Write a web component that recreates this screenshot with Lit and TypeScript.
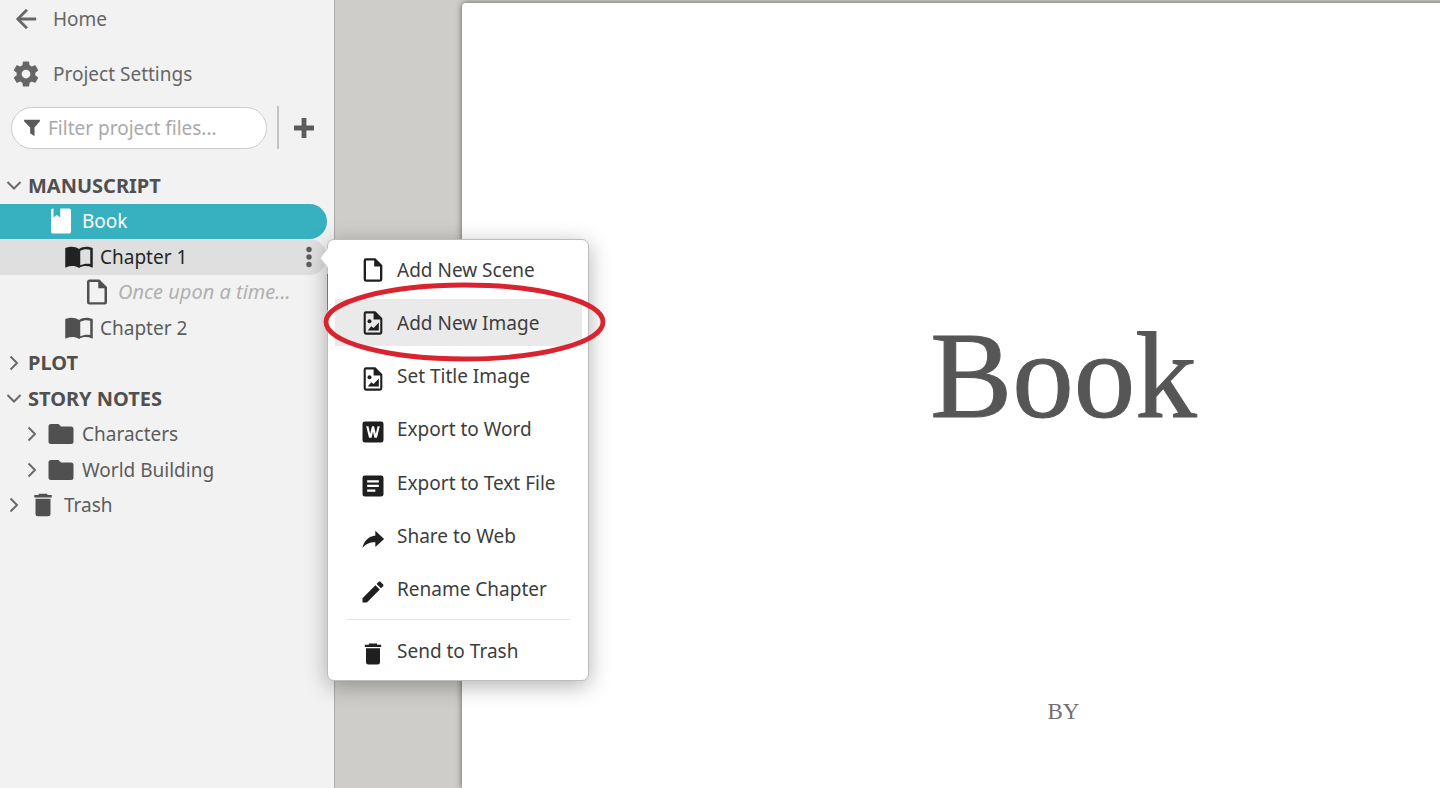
import { LitElement, html, css, svg, nothing } from "lit";
import { customElement, state } from "lit/decorators.js";
import { classMap } from "lit/directives/class-map.js";

const icons = {
  back: svg`<path d="M20 11H7.8l5.600-5.600L12 4l-8 8 8 8 1.400-1.400L7.800 13H20z" stroke="currentColor" stroke-width=".3"/>`,
  gear: svg`<path d="M12 15.5A3.5 3.5 0 0 1 8.5 12 3.5 3.5 0 0 1 12 8.500a3.500 3.500 0 0 1 3.500 3.500 3.500 3.500 0 0 1-3.500 3.500m7.430-2.530c.04-.32.07-.64.07-.97s-.03-.66-.07-1l2.110-1.630c.19-.15.24-.42.12-.64l-2-3.460c-.12-.22-.39-.31-.61-.22l-2.490 1c-.52-.39-1.060-.73-1.690-.98l-.37-2.650A.506.506 0 0 0 14 2h-4c-.25 0-.46.18-.5.42l-.37 2.650c-.63.25-1.170.59-1.690.98l-2.490-1c-.22-.09-.49 0-.61.22l-2 3.460c-.13.22-.07.49.12.64L4.570 11c-.04.34-.07.67-.07 1s.03.65.07.97l-2.110 1.660c-.19.15-.25.42-.12.64l2 3.460c.12.22.39.3.61.22l2.490-1.010c.52.4 1.060.74 1.690.99l.37 2.650c.04.24.25.42.5.42h4c.25 0 .46-.18.5-.42l.37-2.650c.63-.26 1.170-.59 1.690-.99l2.490 1.010c.22.08.49 0 .61-.22l2-3.460c.12-.22.07-.49-.12-.64z"/>`,
  filter: svg`<path d="M2.500 2h19v1.800l-6.500 7.600v10.600l-5.200-3.800v-6.800L2.500 3.800z"/>`,
  plus: svg`<path d="M9.600 2h4.800v7.600H22v4.800h-7.600V22H9.600v-7.600H2V9.600h7.600z"/>`,
  book: svg`<path d="M5.500 2H6v7.200l2.700-2 2.700 2V2H18.500A1.500 1.500 0 0 1 20 3.500v17A1.500 1.500 0 0 1 18.500 22h-13A1.500 1.500 0 0 1 4 20.500v-17A1.500 1.500 0 0 1 5.500 2z"/>`,
  open: svg`<path fill-rule="evenodd" d="M1 5c3-1.700 8-1.700 11 .6 3-2.300 8-2.300 11-.6v15c0 .3-.3.500-.6.400-3.300-1.600-7.300-1.500-10.400.4-3.100-1.900-7.100-2-10.400-.4-.3.100-.6-.1-.6-.4zm12 2v11.600c2.400-1.200 5.400-1.600 8-1V6.200C18.600 5.400 15.400 5.500 13 7z"/>`,
  doc: svg`<path fill-rule="evenodd" d="M6 2a2 2 0 0 0-2 2v16a2 2 0 0 0 2 2h12a2 2 0 0 0 2-2V8l-6-6zm0 1.900h7V9h5v11.100H6z"/>`,
  image: svg`<path fill-rule="evenodd" d="M6 2a2 2 0 0 0-2 2v16a2 2 0 0 0 2 2h12a2 2 0 0 0 2-2V8l-6-6zm-.2 1.900h6.700V9h5.700v11.100H5.800z"/><circle cx="9" cy="10.500" r="1.700"/><path d="M7.500 18.500l3-3.800 2 1.600 4.500-4.800v7z"/>`,
  folder: svg`<path d="M10 4H4a2 2 0 0 0-2 2v12a2 2 0 0 0 2 2h16a2 2 0 0 0 2-2V8a2 2 0 0 0-2-2h-8z"/>`,
  trash: svg`<path d="M8.500 3h7v1H19v2H5V4h3.500zM6 7h12v12a2 2 0 0 1-2 2H8a2 2 0 0 1-2-2z"/>`,
  word: svg`<path fill-rule="evenodd" d="M5 3h14a2 2 0 0 1 2 2v14a2 2 0 0 1-2 2H5a2 2 0 0 1-2-2V5a2 2 0 0 1 2-2zm1.200 4 2.400 10h2.200L12 11.500l1.200 5.500h2.200l2.400-10h-1.900l-1.500 6.800L12.900 7h-1.800l-1.500 6.800L8.100 7z"/>`,
  text: svg`<path fill-rule="evenodd" d="M5 3h14a2 2 0 0 1 2 2v14a2 2 0 0 1-2 2H5a2 2 0 0 1-2-2V5a2 2 0 0 1 2-2zm2 4v1.900h10V7zm0 4v1.900h10V11zm0 4v1.900h7V15z"/>`,
  share: svg`<path d="M14 5l7.500 7-7.500 6.800v-4.100c-5 0-8.500 1.600-11 5.100 1-5 4-9.700 11-10.700z"/>`,
  pencil: svg`<path d="M20.710 7.040c.39-.39.39-1.040 0-1.410l-2.340-2.340c-.37-.39-1.020-.39-1.410 0l-1.840 1.830 3.750 3.750zM3 17.250V21h3.750L17.810 9.930l-3.750-3.750z"/>`,
};
type IconName = keyof typeof icons;

const icon = (name: IconName, size = "icon") =>
  html`<svg class=${size} viewBox="0 0 24 24" aria-hidden="true">${icons[name]}</svg>`;

interface TreeNode {
  label: string;
  level: number;
  icon?: IconName;
  open?: boolean;
  kind?: "section" | "selected" | "active" | "draft";
}

const tree: TreeNode[] = [
  { label: "MANUSCRIPT", level: 0, open: true, kind: "section" },
  { label: "Book", level: 1, icon: "book", kind: "selected" },
  { label: "Chapter 1", level: 2, icon: "open", kind: "active" },
  { label: "Once upon a time...", level: 3, icon: "doc", kind: "draft" },
  { label: "Chapter 2", level: 2, icon: "open" },
  { label: "PLOT", level: 0, open: false, kind: "section" },
  { label: "STORY NOTES", level: 0, open: true, kind: "section" },
  { label: "Characters", level: 1, icon: "folder", open: false },
  { label: "World Building", level: 1, icon: "folder", open: false },
  { label: "Trash", level: 0, icon: "trash", open: false },
];

const actions: { label: string; icon: IconName; raised?: boolean }[] = [
  { label: "Add New Scene", icon: "doc", raised: true },
  { label: "Add New Image", icon: "image", raised: true },
  { label: "Set Title Image", icon: "image" },
  { label: "Export to Word", icon: "word" },
  { label: "Export to Text File", icon: "text" },
  { label: "Share to Web", icon: "share" },
  { label: "Rename Chapter", icon: "pencil" },
];

@customElement("chapter-menu")
export class ChapterMenu extends LitElement {
  @state() private current = "Add New Image";

  static styles = css`
    :host {
      display: block;
      box-sizing: border-box;
      width: 262px;
      padding: 6px 6px 6px 7px;
      background: #fff;
      border: 1px solid #bdbdbd;
      border-radius: 7px;
      box-shadow: 0 5px 22px rgba(0, 0, 0, 0.3);
    }
    .arrow {
      position: absolute;
      left: -9px;
      top: 7px;
      width: 10px;
      height: 22px;
    }
    .edge {
      position: absolute;
      left: -1px;
      top: 34px;
      width: 1px;
      height: 36px;
      background: #a8605c;
    }
    .list {
      display: flex;
      flex-direction: column;
      justify-content: space-between;
      min-height: 367px;
    }
    .item {
      display: flex;
      align-items: center;
      gap: 10px;
      width: 100%;
      height: 47px;
      padding: 0 0 0 24px;
      border: 0;
      background: none;
      color: #3d3d3d;
      font: inherit;
      text-align: left;
      white-space: nowrap;
      cursor: pointer;
    }
    .current {
      background: #eaeaea;
    }
    .glyph {
      width: 28px;
      height: 28px;
      fill: #1f1f1f;
    }
    .item:not(.raised) .glyph {
      margin-top: 6px;
    }
    .rule {
      margin: 6px 12px 7px;
      border: 0;
      border-top: 1px solid #e4e4e4;
    }
    .ring {
      position: absolute;
      left: -6px;
      top: 42px;
      width: 284px;
      height: 80px;
      pointer-events: none;
    }
  `;

  private item(label: string, name: IconName, raised = false) {
    return html`<button
      role="menuitem"
      class=${classMap({ item: true, raised, current: label === this.current })}
      @mouseenter=${() => (this.current = label)}
    >
      ${icon(name, "glyph")}<span>${label}</span>
    </button>`;
  }

  render() {
    return html`
      <svg class="arrow" viewBox="0 0 10 22" aria-hidden="true">
        <path d="M10 0 1 11l9 11z" fill="#fff" />
        <path d="M9 1 1 11l8 10" fill="none" stroke="#d0d0d0" />
      </svg>
      <div class="edge"></div>
      <div role="menu" aria-label="Chapter actions">
        <div class="list">${actions.map((a) => this.item(a.label, a.icon, a.raised))}</div>
        <hr class="rule" />
        ${this.item("Send to Trash", "trash")}
      </div>
      <svg class="ring" viewBox="0 0 284 80" aria-hidden="true">
        <ellipse cx="142.500" cy="40" rx="138.500" ry="37" fill="none" stroke="#d9232e" stroke-width="4.800" />
      </svg>
    `;
  }
}

@customElement("app-root")
export class AppRoot extends LitElement {
  static styles = css`
    :host {
      display: flex;
      height: 100vh;
      overflow: hidden;
      background: #cecdc9;
      color: #5c5c5c;
      font: 19px/30px "Noto Sans", "Open Sans", sans-serif;
    }
    button,
    input {
      font: inherit;
      color: inherit;
    }
    .sidebar {
      position: relative;
      z-index: 1;
      box-sizing: border-box;
      flex: none;
      width: 335px;
      background: #f2f2f2;
      border-right: 1px solid #a9a9a9;
    }
    .nav {
      display: flex;
      flex-direction: column;
      gap: 25px;
      padding: 4px 11px 17px;
    }
    .link {
      display: flex;
      align-items: center;
      gap: 12px;
      color: #666;
      text-decoration: none;
    }
    .icon {
      flex: none;
      width: 30px;
      height: 30px;
      fill: currentColor;
    }
    .tools {
      display: flex;
      align-items: center;
      padding: 0 6px 19px 11px;
    }
    .search {
      box-sizing: border-box;
      display: flex;
      align-items: center;
      gap: 6px;
      flex: 1;
      min-width: 0;
      height: 42px;
      padding: 0 12px 0 10px;
      background: #fff;
      border: 1px solid #ccc;
      border-radius: 21px;
    }
    .hint {
      display: flex;
    }
    .small {
      width: 20px;
      height: 20px;
      fill: #5a5a5a;
    }
    .field {
      flex: 1;
      min-width: 0;
      padding: 0;
      border: 0;
      outline: 0;
      background: none;
    }
    .field::placeholder {
      color: #a9a9a9;
      opacity: 1;
    }
    .add {
      display: flex;
      align-items: center;
      justify-content: center;
      height: 43px;
      width: 51px;
      margin-left: 10px;
      padding: 0;
      border: 0;
      border-left: 2px solid #c4c4c4;
      background: none;
    }
    .add .icon {
      width: 24px;
      height: 24px;
    }
    .tree {
      display: grid;
      grid-auto-rows: 1fr;
      min-height: 355px;
      margin: 0;
      padding: 0 7px 0 0;
      list-style: none;
    }
    .row {
      position: relative;
      display: flex;
      align-items: center;
      border-radius: 0 18px 18px 0;
    }
    .level1 { padding-left: 18px; }
    .level2 { padding-left: 36px; }
    .level3 { padding-left: 54px; }
    .toggle {
      flex: none;
      display: flex;
      align-items: center;
      justify-content: center;
      width: 28px;
      height: 30px;
      padding: 0;
      border: 0;
      background: none;
    }
    .chevron {
      width: 16px;
      height: 16px;
      fill: none;
      stroke: #6a6a6a;
      stroke-width: 2;
    }
    .name {
      display: flex;
      align-items: center;
      gap: 6px;
      flex: 1;
      padding: 0;
      border: 0;
      background: none;
      text-align: left;
      white-space: nowrap;
    }
    .name .icon {
      fill: #505050;
    }
    .section {
      font-size: 20px;
      font-weight: 700;
      color: #505050;
    }
    .selected {
      background: #37b0c0;
      color: #fff;
      text-shadow: 0 1px 2px rgba(0, 0, 0, 0.4);
    }
    .selected .name .icon {
      fill: #fff;
    }
    .active {
      background: #dfdfdf;
      color: #262626;
    }
    .active .name .icon {
      fill: #222;
    }
    .draft {
      color: #b0b0b0;
      font-size: 20px;
      font-style: italic;
    }
    .more {
      display: flex;
      width: 24px;
      height: 24px;
      margin-right: 6px;
      padding: 0;
      border: 0;
      background: none;
    }
    .dots {
      width: 24px;
      height: 24px;
      fill: #5c5c5c;
    }
    .menu {
      position: absolute;
      left: 100%;
      top: 0;
      color: #3d3d3d;
    }
    .workspace {
      flex: 1;
      min-width: 0;
      padding: 3px 0 0 127px;
    }
    .page {
      box-sizing: border-box;
      display: flex;
      flex-direction: column;
      align-items: center;
      gap: 248px;
      width: 123%;
      min-height: 100%;
      padding-top: 300px;
      background: #fff;
      border-radius: 4px 4px 0 0;
      box-shadow: 0 0 6px rgba(0, 0, 0, 0.55);
      font-family: "Liberation Serif", serif;
    }
    .title {
      margin: 0;
      color: #565656;
      font-size: 123px;
      line-height: 146px;
      font-weight: 400;
      -webkit-text-stroke: 1px #565656;
    }
    .by {
      margin: 0;
      color: #707070;
      font-size: 23px;
      line-height: 30px;
    }
  `;

  private row(n: TreeNode) {
    const active = n.kind === "active";
    return html`<li class="row level${n.level} ${n.kind ?? ""}">
      ${n.open === undefined
        ? html`<span class="toggle"></span>`
        : html`<button class="toggle" aria-label="Toggle ${n.label}" aria-expanded=${n.open}>
            <svg class="chevron" viewBox="0 0 16 16" aria-hidden="true">
              <path d=${n.open ? "M1.500 4 8 10.500 14.500 4" : "M4.500 1.500 11 8 4.500 14.500"} />
            </svg>
          </button>`}
      <button class="name">${n.icon ? icon(n.icon) : nothing}<span>${n.label}</span></button>
      ${active
        ? html`<button class="more" aria-label="Chapter options">
              <svg class="dots" viewBox="0 0 24 24" aria-hidden="true">
                <circle cx="12" cy="4.500" r="2.700" />
                <circle cx="12" cy="12" r="2.700" />
                <circle cx="12" cy="19.500" r="2.700" />
              </svg>
            </button>
            <chapter-menu class="menu"></chapter-menu>`
        : nothing}
    </li>`;
  }

  render() {
    return html`
      <aside class="sidebar">
        <nav class="nav">
          <a class="link" href="#home">${icon("back")}<span>Home</span></a>
          <a class="link" href="#settings">${icon("gear")}<span>Project Settings</span></a>
        </nav>
        <div class="tools">
          <div class="search">
            <label for="filter" aria-label="Filter" class="hint">${icon("filter", "small")}</label>
            <input id="filter" class="field" type="text" placeholder="Filter project files..." />
          </div>
          <button class="add" aria-label="Add">${icon("plus")}</button>
        </div>
        <ul class="tree">${tree.map((n) => this.row(n))}</ul>
      </aside>
      <main class="workspace">
        <article class="page">
          <h1 class="title">Book</h1>
          <p class="by">BY</p>
        </article>
      </main>
    `;
  }
}
